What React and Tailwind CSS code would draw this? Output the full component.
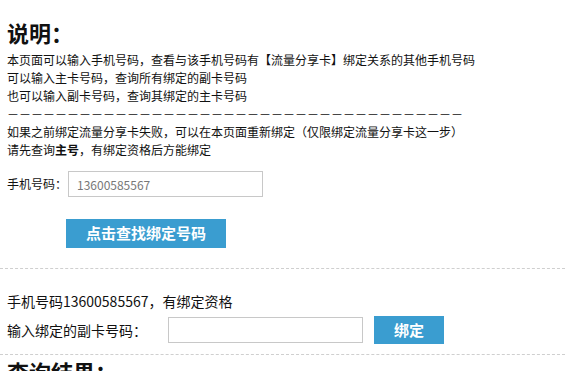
import React from "react";

export default function App() {
  const font = { fontFamily: '"Noto Sans CJK SC", "Liberation Sans", sans-serif' };
  return (
    <div className="w-[565px] h-[371px] overflow-hidden bg-white text-[#111]" style={font}>
      <div className="px-[7px] pt-[18px]">
        <h1 className="text-[22px] leading-[28px] font-bold mb-[5px]">说明：</h1>
        <div className="text-[12px] leading-[18px]">
          <p>本页面可以输入手机号码，查看与该手机号码有【流量分享卡】绑定关系的其他手机号码</p>
          <p>可以输入主卡号码，查询所有绑定的副卡号码</p>
          <p>也可以输入副卡号码，查询其绑定的主卡号码</p>
          <p className="tracking-[0px]">－－－－－－－－－－－－－－－－－－－－－－－－－－－－－－－－－－－－－－</p>
          <p>如果之前绑定流量分享卡失败，可以在本页面重新绑定（仅限绑定流量分享卡这一步）</p>
          <p>
            请先查询<b>主号</b>，有绑定资格后方能绑定
          </p>
        </div>
        <div className="mt-[12px] flex items-center text-[12px]">
          <span className="w-[61px]">手机号码：</span>
          <input
            className="w-[195px] h-[26px] border border-[#c8c8c8] px-[8px] text-[12px] text-[#777] outline-none"
            defaultValue="13600585567"
          />
        </div>
        <div className="mt-[22px] pl-[59px]">
          <button className="w-[160px] h-[29px] bg-[#3a9dd0] text-white text-[15px] font-bold">
            点击查找绑定号码
          </button>
        </div>
      </div>
      <div className="mt-[20px] border-t border-dashed border-[#cfcfcf] mx-0" />
      <div className="px-[7px] pt-[22px] text-[14px]">
        <p className="leading-[20px]">手机号码13600585567，有绑定资格</p>
        <div className="mt-[5px] flex items-center">
          <span className="w-[161px]">输入绑定的副卡号码：</span>
          <input className="w-[195px] h-[26px] border border-[#c8c8c8] outline-none" />
          <button className="ml-[11px] w-[70px] h-[28px] bg-[#3a9dd0] text-white text-[15px] font-bold">
            绑定
          </button>
        </div>
      </div>
      <div className="mt-[10px] border-t border-dashed border-[#cfcfcf]" />
      <h2 className="px-[7px] pt-[2px] text-[22px] leading-[28px] font-bold">查询结果：</h2>
    </div>
  );
}
